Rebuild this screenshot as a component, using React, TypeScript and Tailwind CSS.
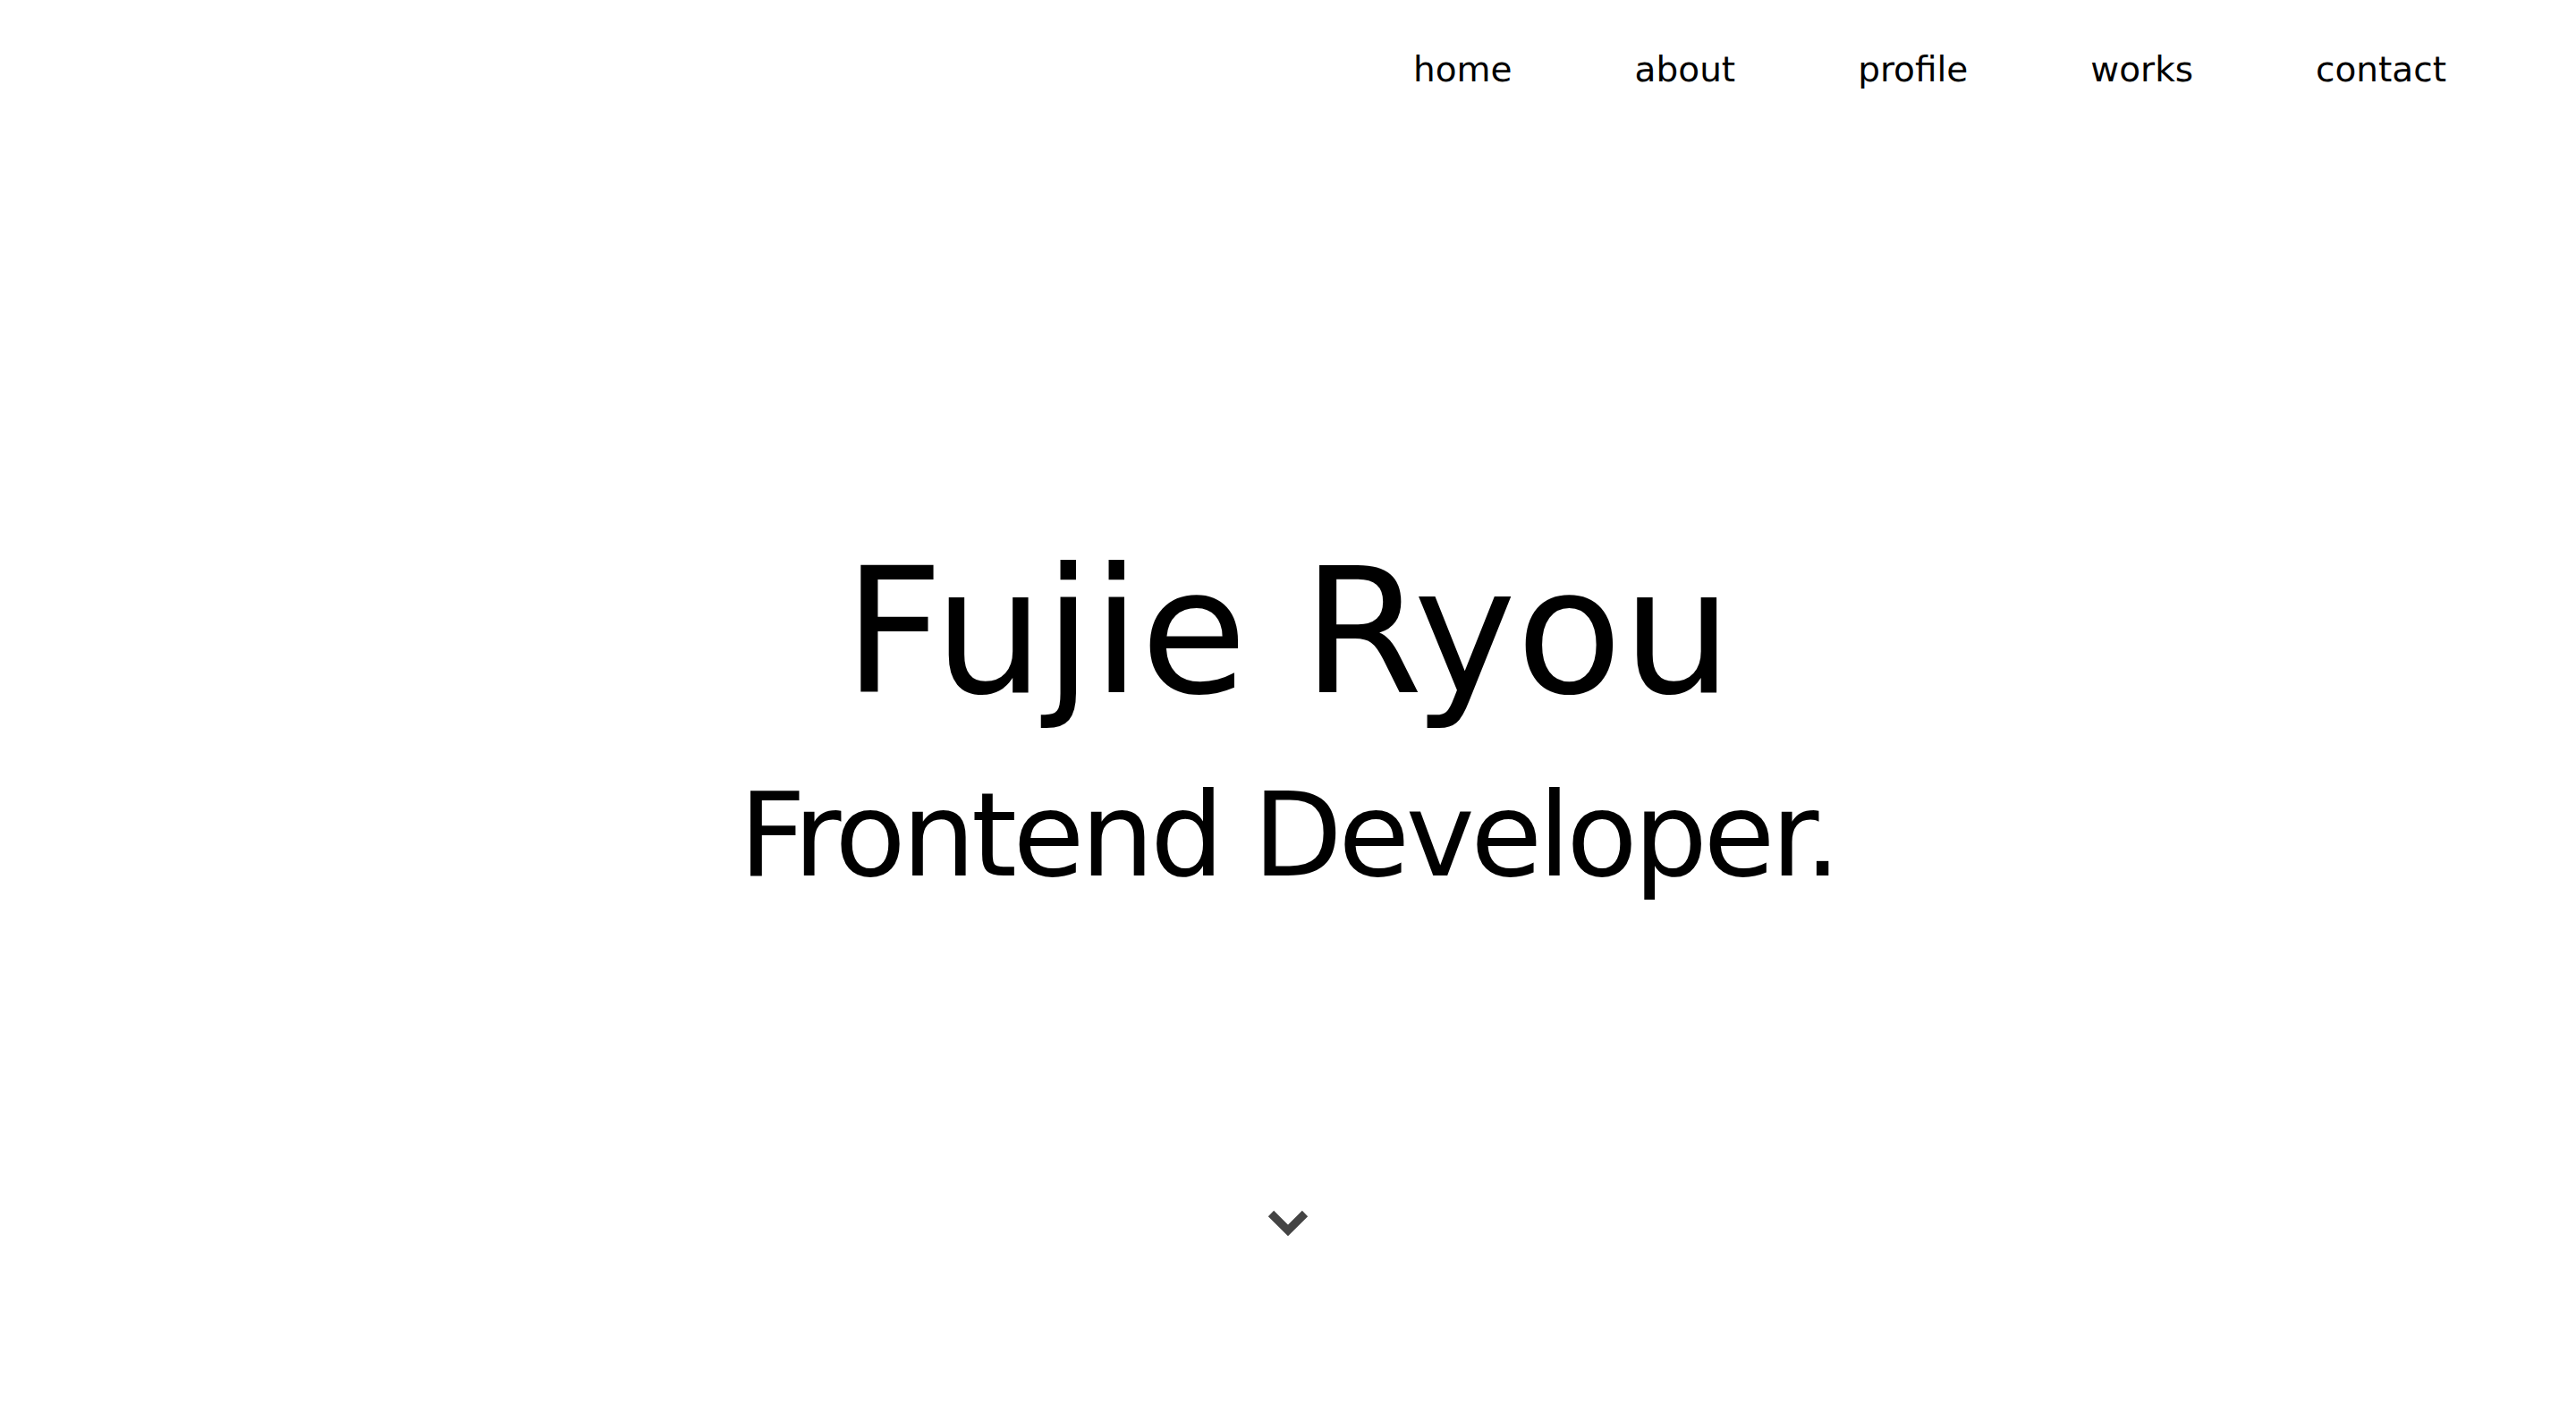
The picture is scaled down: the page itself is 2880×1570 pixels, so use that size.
import React from 'react';

const links = ['home', 'about', 'profile', 'works', 'contact'];

export default function App() {
  return (
    <div className="h-[1570px] w-full bg-white text-black font-['DejaVu_Sans',sans-serif] flex flex-col">
      <header className="flex justify-end pt-[48px] pr-[145px]">
        <nav className="flex gap-[137px]">
          {links.map((l) => (
            <a key={l} href={`#${l}`} className="text-[39px] leading-[60px] text-black">
              {l}
            </a>
          ))}
        </nav>
      </header>

      <main className="flex flex-col items-center">
        <h1 className="mt-[502px] text-[194px] leading-none font-normal">Fujie Ryou</h1>
        <p className="mt-[65px] text-[130px] leading-none tracking-[-4.5px]">Frontend Developer.</p>
        <a href="#about" className="mt-[352px]">
          <svg width="50" height="34" viewBox="0 0 50 34" fill="none">
            <polyline points="6,6 25,25 44,6" stroke="#444444" strokeWidth="9" strokeLinecap="butt" strokeLinejoin="miter" />
          </svg>
        </a>
      </main>
    </div>
  );
}
